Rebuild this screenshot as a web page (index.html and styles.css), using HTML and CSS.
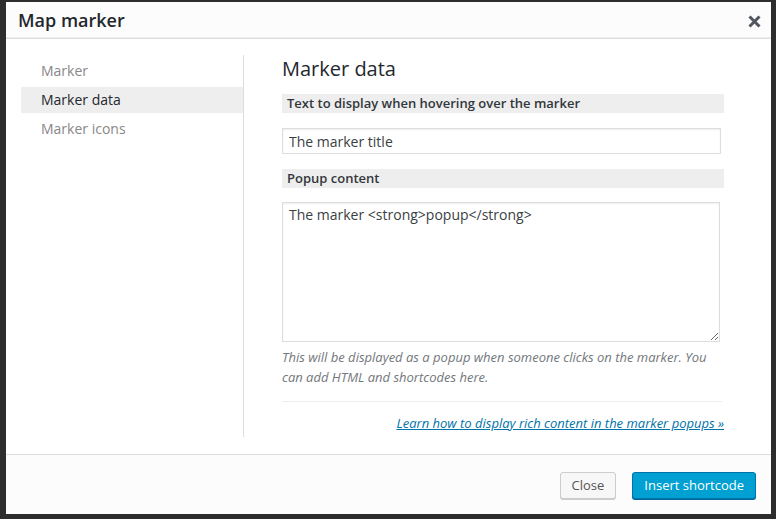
FILE: index.html
```html
<!DOCTYPE html>
<html lang="en">
<head>
<meta charset="utf-8">
<title>Map marker</title>
<link rel="stylesheet" href="styles.css">
</head>
<body>
<div class="modal">
  <div class="modal-header">
    <h1 class="modal-title">Map marker</h1>
    <button class="modal-close" type="button" aria-label="Close">
      <svg width="13" height="13" viewBox="0 0 13 13"><path d="M1.5 1.5L11.5 11.5M11.5 1.5L1.5 11.5" stroke="#50575e" stroke-width="3" stroke-linecap="butt"/></svg>
    </button>
  </div>
  <div class="modal-body">
    <ul class="menu">
      <li class="menu-item">Marker</li>
      <li class="menu-item is-active">Marker data</li>
      <li class="menu-item">Marker icons</li>
    </ul>
    <div class="panel">
      <h2 class="panel-title">Marker data</h2>
      <div class="field-label">Text to display when hovering over the marker</div>
      <input class="text-input" type="text" value="The marker title">
      <div class="field-label">Popup content</div>
      <textarea class="text-area">The marker &lt;strong&gt;popup&lt;/strong&gt;</textarea>
      <p class="description">This will be displayed as a popup when someone clicks on the marker. You can add HTML and shortcodes here.</p>
      <div class="divider"></div>
      <p class="help-link"><a href="#">Learn how to display rich content in the marker popups »</a></p>
    </div>
  </div>
  <div class="modal-footer">
    <button class="btn btn-secondary" type="button">Close</button>
    <button class="btn btn-primary" type="button">Insert shortcode</button>
  </div>
</div>
</body>
</html>
```

FILE: styles.css
```css
* {
  box-sizing: border-box;
}

html, body {
  margin: 0;
  height: 519px;
}

body {
  background: #2d2d2d;
  padding: 2px 5px 5px 6px;
  font-family: "Open Sans", "Noto Sans", sans-serif;
  color: #32373c;
  overflow: hidden;
}

.modal {
  width: 765px;
  height: 512px;
  background: #fff;
  display: flex;
  flex-direction: column;
}

/* header */
.modal-header {
  height: 37px;
  flex: none;
  background: #fcfcfc;
  border-bottom: 1px solid #ddd;
  box-shadow: inset 0 -4px 0 -3px #eee;
  display: flex;
  align-items: center;
  justify-content: space-between;
  padding: 0 10px 0 12px;
}

.modal-title {
  margin: 0;
  font-size: 18px;
  font-weight: 600;
  color: #23282d;
  line-height: 24px;
}

.modal-close {
  border: 0;
  background: none;
  padding: 0;
  width: 14px;
  height: 14px;
  display: flex;
  align-items: center;
  justify-content: center;
  margin-top: 2px;
}

/* body */
.modal-body {
  flex: 1;
  display: flex;
  min-height: 0;
}

.menu {
  list-style: none;
  margin: 16px 0 17px 15px;
  padding: 3px 0 0;
  width: 223px;
  flex: none;
  border-right: 1px solid #ddd;
}

.menu-item {
  height: 26px;
  line-height: 26px;
  margin-bottom: 3px;
  padding-left: 20px;
  font-size: 14px;
  color: #888;
}

.menu-item.is-active {
  background: #eee;
  color: #23282d;
}

.panel {
  flex: 1;
  padding: 16px 47px 0 38px;
}

.panel-title {
  margin: 0 0 11px;
  font-size: 20px;
  font-weight: 400;
  line-height: 28px;
  color: #23282d;
}

.field-label {
  background: #eee;
  height: 19px;
  line-height: 19px;
  padding-left: 5px;
  font-size: 13px;
  font-weight: 600;
  color: #32373c;
  margin-bottom: 15px;
}

.text-input {
  display: block;
  width: 439px;
  height: 26px;
  margin: 0 0 15px;
  padding: 0 6px;
  border: 1px solid #ddd;
  box-shadow: inset 0 1px 2px rgba(0, 0, 0, 0.07);
  font-family: inherit;
  font-size: 14px;
  color: #3a3f44;
  background: #fff;
  outline: none;
}

.field-label + .text-area {
  margin-top: -1px;
}

.text-area {
  display: block;
  width: 438px;
  height: 140px;
  margin: 0;
  padding: 2px 6px;
  border: 1px solid #ddd;
  box-shadow: inset 0 1px 2px rgba(0, 0, 0, 0.07);
  font-family: inherit;
  font-size: 14px;
  line-height: 20px;
  color: #3a3f44;
  background: #fff;
  outline: none;
}

.description {
  margin: 5px 0 0;
  font-size: 13px;
  line-height: 20px;
  font-style: italic;
  color: #72777c;
}

.divider {
  height: 1px;
  background: #eee;
  margin: 14px 2px 0 0;
}

.help-link {
  margin: 11px 0 0;
  text-align: right;
  font-size: 13px;
  line-height: 20px;
  font-style: italic;
}

.help-link a {
  color: #0073aa;
  text-decoration: underline;
}

/* footer */
.modal-footer {
  height: 60px;
  flex: none;
  background: #fcfcfc;
  border-top: 1px solid #ddd;
  display: flex;
  align-items: center;
  justify-content: flex-end;
  gap: 16px;
  padding: 1px 15px 0 0;
}

.btn {
  height: 27px;
  padding: 0 11px 1px;
  font-family: inherit;
  font-size: 13px;
  line-height: 25px;
  border-radius: 3px;
  border: 1px solid;
  cursor: pointer;
}

.btn-secondary {
  background: #f7f7f7;
  border-color: #ccc;
  color: #555;
  box-shadow: 0 1px 0 #ccc;
}

.btn-primary {
  background: #00a0d2;
  border-color: #0073aa;
  color: #fff;
  box-shadow: 0 1px 0 #006799;
}
```
